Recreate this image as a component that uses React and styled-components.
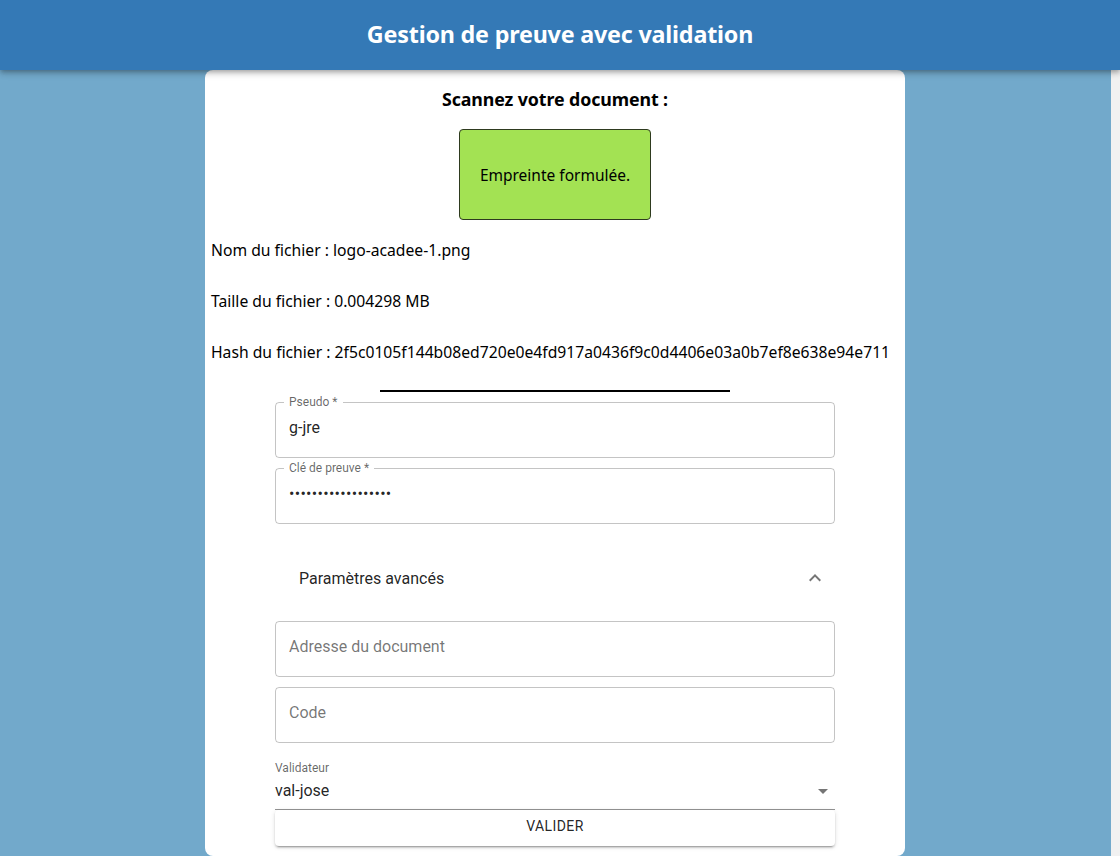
import React from 'react'
import styled, { createGlobalStyle } from 'styled-components'

const GlobalStyle = createGlobalStyle`
  html, body {
    margin: 0;
    padding: 0;
    background: #72a9cb;
  }
  * { box-sizing: border-box; }
`

const Page = styled.div`
  min-height: 856px;
  display: flex;
  flex-direction: column;
  font-family: "Noto Sans", "Open Sans", sans-serif;
`

const Header = styled.header`
  position: relative;
  z-index: 2;
  height: 70px;
  background: #3479b6;
  display: flex;
  align-items: center;
  justify-content: center;
  box-shadow: 0 2px 4px -1px rgba(0,0,0,0.2), 0 4px 5px 0 rgba(0,0,0,0.14), 0 1px 10px 0 rgba(0,0,0,0.12);
`

const Title = styled.h1`
  margin: 0 0 2px;
  color: #fff;
  font-size: 23.3px;
  font-weight: 700;
  letter-spacing: -0.2px;
`

const Body = styled.div`
  flex: 1;
  display: flex;
`

const Main = styled.main`
  flex: 1;
  display: flex;
  justify-content: center;
  align-items: flex-start;
`

const Gutter = styled.div`
  width: 10px;
  background: #f1f1f1;
  border-left: 1px solid #72a9cb;
`

const Card = styled.section`
  width: 700px;
  background: #fff;
  border-radius: 8px;
  padding: 18px 0 10px;
  display: flex;
  flex-direction: column;
  align-items: center;
  color: #000;
`

const CardTitle = styled.h2`
  margin: 0;
  font-size: 17.8px;
  line-height: 22px;
  font-weight: 700;
  letter-spacing: -0.1px;
`

const HashBox = styled.div`
  margin-top: 19px;
  width: 192px;
  height: 91px;
  background: #a3e253;
  border: 1px solid #2e3a1f;
  border-radius: 4px;
  display: flex;
  align-items: center;
  justify-content: center;
  font-size: 15.5px;
`

const InfoList = styled.div`
  align-self: stretch;
  padding: 20px 6px 0;
  display: flex;
  flex-direction: column;
  gap: 30px;
`

const InfoLine = styled.p`
  margin: 0;
  font-size: 15.7px;
  line-height: 21px;
  white-space: nowrap;
`

const Rule = styled.hr`
  width: 50%;
  margin: 27px 0 10px;
  border: none;
  border-top: 2px solid #000;
`

const Form = styled.form`
  width: 560px;
  display: flex;
  flex-direction: column;
  font-family: Roboto, "Liberation Sans", sans-serif;
`

const Field = styled.div`
  position: relative;
  height: 56px;
  margin-bottom: 10px;
  padding: 0 13px 6px;
  border: 1px solid rgba(0,0,0,0.23);
  border-radius: 4px;
  display: flex;
  align-items: center;
`

/* floating label sitting in the outline notch */
const FloatLabel = styled.label`
  position: absolute;
  top: -8px;
  left: 8px;
  padding: 0 5px;
  background: #fff;
  font-size: 12px;
  line-height: 14px;
  color: rgba(0,0,0,0.6);
`

const Value = styled.span`
  font-size: 16px;
  line-height: 19px;
  letter-spacing: ${({ $dots }) => ($dots ? '0.3px' : 'normal')};
  color: ${({ $placeholder }) => ($placeholder ? 'rgba(0,0,0,0.55)' : 'rgba(0,0,0,0.87)')};
`

const AccordionHead = styled.div`
  height: 64px;
  margin: 12px 0 11px;
  padding: 0 8px 0 24px;
  display: flex;
  align-items: center;
  justify-content: space-between;
  font-size: 16px;
  color: rgba(0,0,0,0.87);
`

const SelectLabel = styled.div`
  margin-top: 8px;
  font-size: 12px;
  line-height: 14px;
  color: rgba(0,0,0,0.6);
`

const Select = styled.div`
  height: 35px;
  padding-bottom: 3px;
  display: flex;
  align-items: center;
  justify-content: space-between;
  border-bottom: 1px solid rgba(0,0,0,0.42);
  font-size: 16px;
  color: rgba(0,0,0,0.87);
`

const Button = styled.button`
  height: 36px;
  padding-bottom: 5px;
  border: none;
  border-radius: 4px;
  background: #fff;
  font-family: Roboto, "Liberation Sans", sans-serif;
  font-size: 14px;
  letter-spacing: 0.4px;
  color: rgba(0,0,0,0.87);
  box-shadow: 0 3px 1px -2px rgba(0,0,0,0.2), 0 2px 2px 0 rgba(0,0,0,0.14), 0 1px 5px 0 rgba(0,0,0,0.12);
`

const ChevronUp = () => (
  <svg width="24" height="24" viewBox="0 0 24 24" fill="rgba(0,0,0,0.54)">
    <path d="M12 8l-6 6 1.41 1.41L12 10.83l4.59 4.58L18 14z" />
  </svg>
)

const ArrowDown = () => (
  <svg width="24" height="24" viewBox="0 0 24 24" fill="rgba(0,0,0,0.54)">
    <path d="M7 10l5 5 5-5z" />
  </svg>
)

function TextField({ label, value, placeholder, dots }) {
  return (
    <Field>
      {label && <FloatLabel>{label}</FloatLabel>}
      <Value $placeholder={!value} $dots={dots}>{value || placeholder}</Value>
    </Field>
  )
}

export default function App() {
  return (
    <Page>
      <GlobalStyle />
      <Header>
        <Title>Gestion de preuve avec validation</Title>
      </Header>
      <Body>
        <Main>
          <Card>
            <CardTitle>Scannez votre document :</CardTitle>
            <HashBox>Empreinte formulée.</HashBox>
            <InfoList>
              <InfoLine>Nom du fichier : logo-acadee-1.png</InfoLine>
              <InfoLine>Taille du fichier : 0.004298 MB</InfoLine>
              <InfoLine>
                Hash du fichier : 2f5c0105f144b08ed720e0e4fd917a0436f9c0d4406e03a0b7ef8e638e94e711
              </InfoLine>
            </InfoList>
            <Rule />
            <Form onSubmit={(e) => e.preventDefault()}>
              <TextField label="Pseudo *" value="g-jre" />
              <TextField label="Clé de preuve *" value="••••••••••••••••••" dots />
              <AccordionHead>
                <span>Paramètres avancés</span>
                <ChevronUp />
              </AccordionHead>
              <TextField placeholder="Adresse du document" />
              <TextField placeholder="Code" />
              <SelectLabel>Validateur</SelectLabel>
              <Select>
                <span>val-jose</span>
                <ArrowDown />
              </Select>
              <Button type="submit">VALIDER</Button>
            </Form>
          </Card>
        </Main>
        <Gutter />
      </Body>
    </Page>
  )
}
